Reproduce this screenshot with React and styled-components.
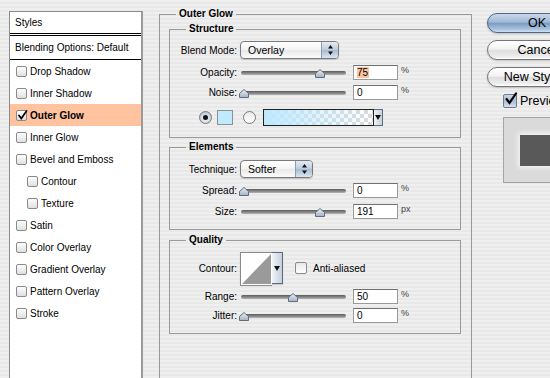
import React from "react";
import styled, { createGlobalStyle } from "styled-components";

const GlobalStyle = createGlobalStyle`
  html, body { margin: 0; padding: 0; }
  body {
    font-family: "Liberation Sans", Arial, sans-serif;
    font-size: 10px;
    color: #000;
  }
`;

const Page = styled.div`
  width: 550px;
  height: 378px;
  overflow: hidden;
  display: flex;
  align-items: flex-start;
  background: repeating-linear-gradient(to bottom, #efefef 0 2px, #e8e8e8 2px 4px);
`;

/* ---------- left list ---------- */
const StylesPanel = styled.div`
  margin: 11px 0 0 9px;
  width: 131px;
  height: 380px;
  flex: none;
  background: #fff;
  border: 1px solid #8c8c8c;
  border-right: 2px solid #9a9a9a;
`;

const PanelHead = styled.div`
  height: ${(p) => p.$h}px;
  display: flex;
  align-items: center;
  padding-left: 5px;
  border-bottom: ${(p) => (p.$double ? "3px double #000" : "1px solid #000")};
`;

const Item = styled.div`
  height: 22px;
  display: flex;
  align-items: center;
  padding-left: ${(p) => (p.$sub ? 17 : 6)}px;
  background: ${(p) => (p.$active ? "#ffc3a0" : "transparent")};
  font-weight: ${(p) => (p.$active ? "bold" : "normal")};
`;

const Box = styled.span`
  width: 11px;
  height: 11px;
  box-sizing: border-box;
  flex: none;
  border: 1px solid #8a8a8a;
  border-radius: 2px;
  background: linear-gradient(#fdfdfd, #e0e0e0);
  margin-right: 3px;
  position: relative;
  svg { position: absolute; left: 0; top: -1px; }
`;

/* ---------- middle ---------- */
const Group = styled.fieldset`
  margin: ${(p) => p.$mt || 0}px 0 0 ${(p) => p.$ml || 0}px;
  padding: ${(p) => p.$pad};
  border: 1px solid #9a9a9a;
  min-width: 0;
  box-sizing: border-box;
  width: ${(p) => (p.$w ? `${p.$w}px` : "auto")};
  height: ${(p) => (p.$h ? `${p.$h}px` : "auto")};
  flex: none;
`;

const Legend = styled.legend`
  font-weight: bold;
  font-size: 10px;
  line-height: 12px;
  padding: 0 3px;
  margin-left: ${(p) => p.$ml}px;
`;

const Row = styled.div`
  display: flex;
  align-items: center;
  height: ${(p) => p.$h}px;
  margin-top: ${(p) => p.$mt || 0}px;
  padding-left: ${(p) => p.$pl || 0}px;
`;

const Label = styled.span`
  width: 67px;
  margin-right: 3px;
  text-align: right;
  flex: none;
  white-space: nowrap;
`;

const Popup = styled.div`
  width: ${(p) => p.$w}px;
  height: 18px;
  box-sizing: border-box;
  border: 1px solid #7a7a7a;
  border-radius: 4px;
  background: linear-gradient(#ffffff, #f3f3f3 50%, #e8e8e8 51%, #fbfbfb);
  display: flex;
  overflow: hidden;
  box-shadow: 0 1px 1px rgba(0, 0, 0, 0.18);
  flex: none;
`;

const PopupText = styled.span`
  flex: 1;
  padding-left: 7px;
  display: flex;
  align-items: center;
  font-size: 10.5px;
`;

const PopupArrows = styled.span`
  width: 16px;
  border-left: 1px solid #8d9cb0;
  background: linear-gradient(#e3ebf4, #bccbdd 50%, #a9bbd2 51%, #d9e5f2);
  display: flex;
  align-items: center;
  justify-content: center;
`;

const Slider = styled.div`
  position: relative;
  width: 106px;
  height: 14px;
  flex: none;
`;

const Track = styled.div`
  position: absolute;
  left: 1px;
  right: 0;
  top: 5px;
  height: 4px;
  border-radius: 2px;
  background: linear-gradient(#5a5a5a, #8d8d8d 60%, #b4b4b4);
`;

const Thumb = styled.svg`
  position: absolute;
  top: 3px;
  left: ${(p) => p.$at - 5}px;
`;

const Field = styled.div`
  width: 45px;
  height: 15px;
  box-sizing: border-box;
  border: 1px solid #9a9a9a;
  border-top-color: #707070;
  background: #fff;
  padding-left: 3px;
  font-size: 10px;
  line-height: 13px;
  margin-left: 7px;
  flex: none;
`;

const Sel = styled.span`
  background: #ffc29e;
  padding-right: 1px;
`;

const Unit = styled.span`
  margin-left: 3px;
  align-self: flex-start;
  font-size: 9px;
  color: #444;
`;

const Radio = styled.span`
  width: 13px;
  height: 13px;
  border-radius: 50%;
  box-sizing: border-box;
  border: 1px solid #7a7a7a;
  background: ${(p) =>
    p.$on
      ? "radial-gradient(circle at 50% 60%, #ffffff 0, #c3cedb 65%, #93a4b8 100%)"
      : "linear-gradient(#e9e9e9, #ffffff)"};
  display: flex;
  align-items: center;
  justify-content: center;
  flex: none;
  margin-right: ${(p) => p.$mr || 0}px;
  &::after {
    content: "";
    display: ${(p) => (p.$on ? "block" : "none")};
    width: 5px;
    height: 5px;
    border-radius: 50%;
    background: #111;
  }
`;

const Swatch = styled.span`
  width: 16px;
  height: 15px;
  box-sizing: border-box;
  border: 1px solid #8f8f8f;
  background: #bfeaff;
  margin-right: 10px;
  flex: none;
`;

const GradientBar = styled.span`
  width: 111px;
  height: 17px;
  box-sizing: border-box;
  border: 1px solid #222;
  background: linear-gradient(to right, #bde9ff 0%, rgba(189, 233, 255, 0.55) 45%, rgba(189, 233, 255, 0) 100%),
    repeating-conic-gradient(#dadada 0 25%, #ffffff 0 50%) 0 0 / 8px 8px;
  margin-left: 7px;
  flex: none;
`;

const DropBtn = styled.span`
  width: ${(p) => p.$w || 9}px;
  height: ${(p) => p.$h || 17}px;
  box-sizing: border-box;
  border: 1px solid #5d6a7a;
  border-left: none;
  background: linear-gradient(to right, #f0f4f8, #c4d0de);
  display: flex;
  align-items: center;
  justify-content: center;
  flex: none;
`;

const ContourBox = styled.div`
  display: flex;
  height: 32px;
  flex: none;
  box-shadow: 0 1px 1px rgba(0, 0, 0, 0.15);
`;

const ContourPic = styled.svg`
  display: block;
  border: 1px solid #8a8a8a;
  border-right: none;
`;

const Check = styled.span`
  display: flex;
  align-items: center;
  margin-left: 12px;
  span:last-child { margin-left: 6px; font-size: 10px; }
`;

const BigBox = styled.span`
  width: 12px;
  height: 12px;
  box-sizing: border-box;
  border: 1px solid #8a8a8a;
  border-radius: 2px;
  background: linear-gradient(#e8e8e8, #ffffff);
  flex: none;
`;

/* ---------- right side ---------- */
const Side = styled.div`
  margin: 13px 0 0 15px;
  width: 100px;
  flex: none;
  display: flex;
  flex-direction: column;
`;

const Btn = styled.div`
  height: 20px;
  border-radius: 10px;
  box-sizing: border-box;
  border: 1px solid ${(p) => (p.$primary ? "#4f6785" : "#767676")};
  font-size: 12.5px;
  display: flex;
  align-items: center;
  justify-content: center;
  margin-bottom: 7px;
  white-space: nowrap;
  background: ${(p) =>
    p.$primary
      ? "linear-gradient(#c9d9ea, #9fb9d6 45%, #7d9cc1 52%, #a8c4e2 85%, #cfe1f2)"
      : "linear-gradient(#ffffff, #f2f2f2 45%, #dedede 52%, #ececec 85%, #ffffff)"};
  box-shadow: 0 1px 2px rgba(0, 0, 0, 0.2);
`;

const PreviewRow = styled.div`
  display: flex;
  align-items: center;
  padding-left: 16px;
  height: 14px;
  font-size: 12.5px;
  span:last-child { margin-left: 3px; }
`;

const PrevBox = styled.span`
  width: 14px;
  height: 14px;
  box-sizing: border-box;
  border: 1px solid #6b7c90;
  border-radius: 2px;
  background: linear-gradient(#cdd9e6, #a9bcd2 50%, #d6e2ee);
  flex: none;
  position: relative;
  svg { position: absolute; left: 0; top: -3px; }
`;

const PreviewPane = styled.div`
  margin: 9px 0 0 16px;
  width: 90px;
  height: 66px;
  box-sizing: border-box;
  background: #dadada;
  border: 1px solid #a4a4a4;
  border-right: none;
  padding: 17px 0 0 16px;
`;

const PreviewSquare = styled.div`
  width: 40px;
  height: 31px;
  background: #595959;
  box-shadow: 0 0 5px 2px rgba(255, 255, 255, 0.7);
`;

/* ---------- small drawings ---------- */
const Tick = ({ size = 11 }) => (
  <svg width={size} height={size} viewBox="0 0 11 11">
    <path d="M2 5.5 L4.3 8.5 L9.5 1" fill="none" stroke="#000" strokeWidth="1.7" strokeLinecap="round" />
  </svg>
);

const UpDown = () => (
  <svg width="5" height="10" viewBox="0 0 5 10">
    <path d="M2.5 0 L5 3.5 H0 Z M2.5 10 L5 6.5 H0 Z" fill="#111" />
  </svg>
);

const Down = () => (
  <svg width="6" height="5" viewBox="0 0 6 5">
    <path d="M0 0 H6 L3 5 Z" fill="#111" />
  </svg>
);

const ThumbIcon = ({ at }) => (
  <Thumb $at={at} width="10" height="9" viewBox="0 0 10 9">
    <defs>
      <linearGradient id="tg" x1="0" y1="0" x2="0" y2="1">
        <stop offset="0" stopColor="#eef2f7" />
        <stop offset="1" stopColor="#a3b1c2" />
      </linearGradient>
    </defs>
    <path d="M5 0.5 L9.5 4.5 V8.5 H0.5 V4.5 Z" fill="url(#tg)" stroke="#5f6d7d" strokeWidth="1" />
  </Thumb>
);

const SliderRow = ({ label, at, value, unit = "%", selected, mt }) => (
  <Row $h={15} $mt={mt}>
    <Label>{label}</Label>
    <Slider>
      <Track />
      <ThumbIcon at={at} />
    </Slider>
    <Field>{selected ? <Sel>{value}</Sel> : value}</Field>
    <Unit>{unit}</Unit>
  </Row>
);

const styleItems = [
  { name: "Drop Shadow" },
  { name: "Inner Shadow" },
  { name: "Outer Glow", active: true },
  { name: "Inner Glow" },
  { name: "Bevel and Emboss" },
  { name: "Contour", sub: true },
  { name: "Texture", sub: true },
  { name: "Satin" },
  { name: "Color Overlay" },
  { name: "Gradient Overlay" },
  { name: "Pattern Overlay" },
  { name: "Stroke" },
];

export default function App() {
  return (
    <>
      <GlobalStyle />
      <Page>
        <StylesPanel>
          <PanelHead $h={21} $double>Styles</PanelHead>
          <PanelHead $h={23}>Blending Options: Default</PanelHead>
          {styleItems.map((it) => (
            <Item key={it.name} $sub={it.sub} $active={it.active}>
              <Box>{it.active && <Tick />}</Box>
              {it.name}
            </Item>
          ))}
        </StylesPanel>

        <Group $mt={8} $ml={16} $w={313} $h={392} $pad="3px 10px 0 9px">
          <Legend $ml={7}>Outer Glow</Legend>

          <Group $pad="6px 0 11px 0">
            <Legend $ml={16}>Structure</Legend>
            <Row $h={18}>
              <Label>Blend Mode:</Label>
              <Popup $w={99}>
                <PopupText>Overlay</PopupText>
                <PopupArrows>
                  <UpDown />
                </PopupArrows>
              </Popup>
            </Row>
            <SliderRow label="Opacity:" at={80} value="75" selected mt={6} />
            <SliderRow label="Noise:" at={4} value="0" mt={5} />
            <Row $h={17} $mt={9} $pl={29}>
              <Radio $on $mr={5} />
              <Swatch />
              <Radio />
              <GradientBar />
              <DropBtn>
                <Down />
              </DropBtn>
            </Row>
          </Group>

          <Group $mt={3} $pad="7px 0 10px 0">
            <Legend $ml={16}>Elements</Legend>
            <Row $h={18}>
              <Label>Technique:</Label>
              <Popup $w={73}>
                <PopupText>Softer</PopupText>
                <PopupArrows>
                  <UpDown />
                </PopupArrows>
              </Popup>
            </Row>
            <SliderRow label="Spread:" at={4} value="0" mt={5} />
            <SliderRow label="Size:" at={80} value="191" unit="px" mt={6} />
          </Group>

          <Group $mt={4} $pad="6px 0 10px 0">
            <Legend $ml={16}>Quality</Legend>
            <Row $h={32}>
              <Label>Contour:</Label>
              <ContourBox>
                <ContourPic width="31" height="32" viewBox="0 0 31 32">
                  <rect width="31" height="32" fill="#fff" />
                  <path d="M1 31 L30 1 V31 Z" fill="#9a9a9a" />
                </ContourPic>
                <DropBtn $w={11} $h={32}>
                  <Down />
                </DropBtn>
              </ContourBox>
              <Check>
                <BigBox />
                <span>Anti-aliased</span>
              </Check>
            </Row>
            <SliderRow label="Range:" at={53} value="50" mt={5} />
            <SliderRow label="Jitter:" at={4} value="0" mt={4} />
          </Group>
        </Group>

        <Side>
          <Btn $primary>OK</Btn>
          <Btn>Cancel</Btn>
          <Btn>New Style...</Btn>
          <PreviewRow>
            <PrevBox>
              <Tick size={14} />
            </PrevBox>
            <span>Preview</span>
          </PreviewRow>
          <PreviewPane>
            <PreviewSquare />
          </PreviewPane>
        </Side>
      </Page>
    </>
  );
}
